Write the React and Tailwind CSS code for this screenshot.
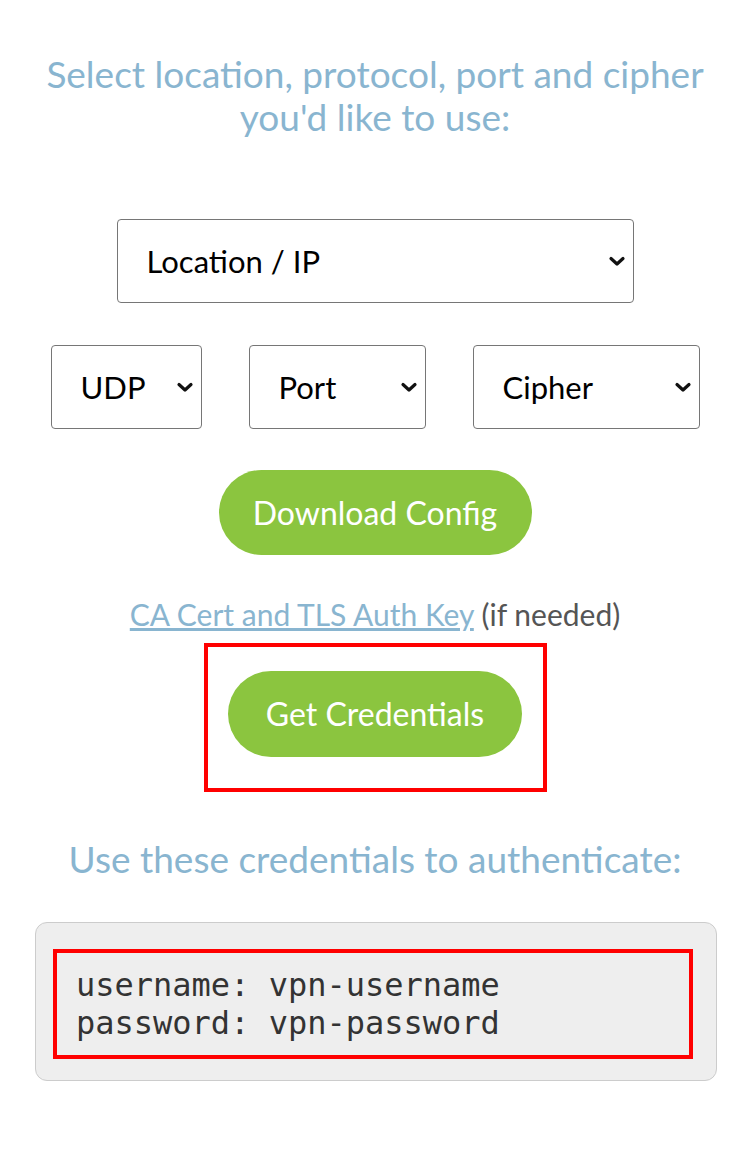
import React from 'react';

const Chevron = () => (
  <svg className="w-[18px] h-[12px]" viewBox="0 0 18 12" fill="none">
    <path d="M3 3.5l6 5.5 6-5.5" stroke="#111" strokeWidth="3.2" strokeLinecap="round" strokeLinejoin="round" />
  </svg>
);

const Select = ({ label, className }) => (
  <div className={`flex items-center justify-between border-[1.5px] border-[#767676] rounded-[4px] bg-white h-[84px] ${className}`}>
    <span className="text-[31px] text-black">{label}</span>
    <Chevron />
  </div>
);

export default function App() {
  return (
    <div className="w-[750px] min-h-[1154px] bg-white font-['Lato','Open_Sans',sans-serif]">
      {/* Heading */}
      <h1 className="pt-[52px] text-center text-[37px] leading-[43px] text-[#89b5d0] font-normal px-[30px]">
        Select location, protocol, port and cipher you'd like to use:
      </h1>

      {/* Selects */}
      <div className="mt-[81px] flex justify-center">
        <Select label="Location / IP" className="w-[517px] pl-[29px] pr-[7px]" />
      </div>
      <div className="mt-[42px] flex justify-center gap-[47px]">
        <Select label="UDP" className="w-[151px] pl-[29px] pr-[7px]" />
        <Select label="Port" className="w-[177px] pl-[29px] pr-[7px]" />
        <Select label="Cipher" className="w-[227px] pl-[29px] pr-[7px]" />
      </div>

      {/* Download */}
      <div className="mt-[41px] flex justify-center">
        <button className="w-[313px] h-[85px] rounded-full bg-[#8bc53f] text-white text-[32px]">
          Download Config
        </button>
      </div>

      <p className="mt-[41px] text-center text-[30px] leading-[36px] text-[#555]">
        <a href="#" className="text-[#89b5d0] underline">CA Cert and TLS Auth Key</a> (if needed)
      </p>

      {/* Get credentials */}
      <div className="mt-[11px] flex justify-center">
        <div className="w-[343px] h-[149px] border-[4px] border-[#ff0000] flex justify-center pt-[24px]">
          <button className="w-[294px] h-[86px] rounded-full bg-[#8bc53f] text-white text-[32px]">
            Get Credentials
          </button>
        </div>
      </div>

      <h2 className="mt-[45px] text-center text-[37px] leading-[44px] text-[#89b5d0] font-normal">
        Use these credentials to authenticate:
      </h2>

      {/* Credentials box */}
      <div className="ml-[35px] w-[682px] mt-[41px] bg-[#eeeeee] border-[1.5px] border-[#cccccc] rounded-[12px] pt-[26px] pb-[21px] pl-[17px] pr-[23px]">
        <div className="border-[4px] border-[#ff0000] pl-[19px] py-[13px] font-['DejaVu_Sans_Mono',monospace] text-[32px] leading-[38px] text-[#333]">
          <div>username: vpn-username</div>
          <div>password: vpn-password</div>
        </div>
      </div>
    </div>
  );
}
